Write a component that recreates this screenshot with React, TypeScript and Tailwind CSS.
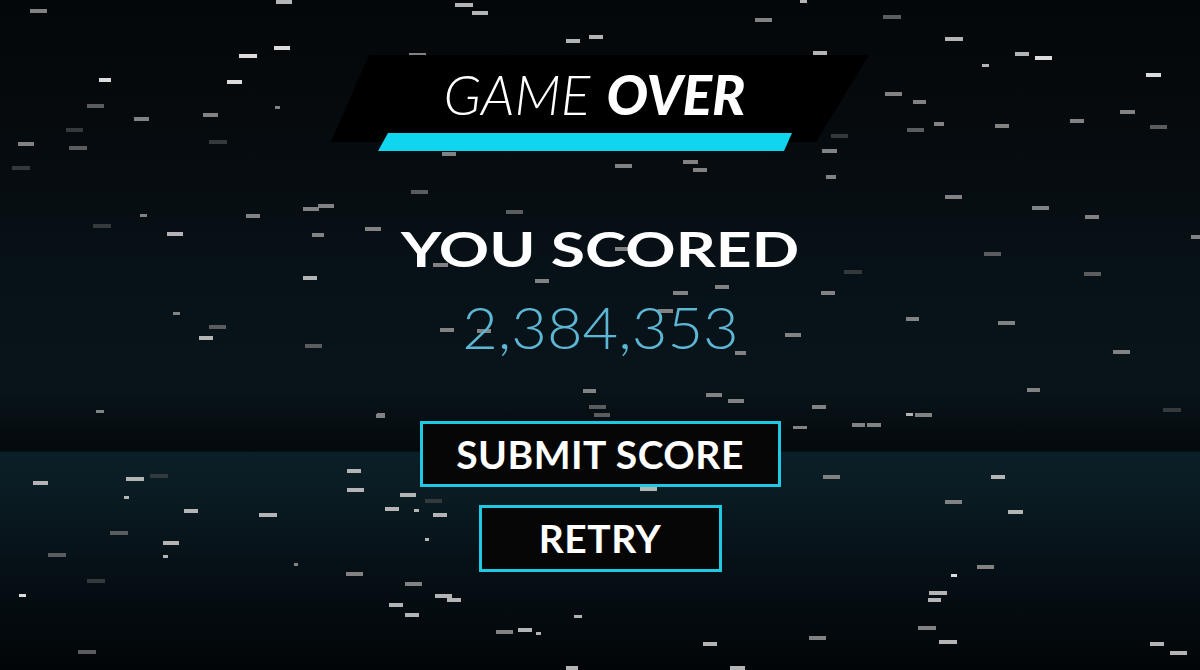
import React from 'react';

// starfield streaks: [x, y, width, tone]
const tones = ['bg-[#dcdcdc]', 'bg-[#b4b4b4]', 'bg-[#828282]', 'bg-[#5a5c5e]', 'bg-[#34393c]'];

const streaks: [number, number, number, number][] = [
  [30, 9, 17, 2], [276, 0, 16, 1], [239, 54, 18, 0], [274, 46, 16, 0], [99, 78, 12, 0],
  [227, 80, 15, 0], [87, 104, 17, 3], [134, 117, 15, 2], [203, 113, 15, 2], [66, 128, 17, 4],
  [18, 142, 16, 2], [69, 146, 18, 3], [209, 140, 18, 4], [12, 166, 18, 4], [275, 106, 5, 2],
  [455, 3, 18, 1], [472, 11, 16, 1], [755, 18, 17, 2], [566, 39, 14, 1], [589, 35, 14, 1],
  [409, 53, 17, 2], [442, 152, 14, 2], [615, 164, 17, 2], [683, 160, 15, 2], [693, 168, 14, 2],
  [411, 190, 17, 3], [303, 207, 16, 2], [318, 204, 16, 2], [506, 210, 17, 3], [365, 227, 16, 2],
  [800, 0, 7, 1], [883, 15, 18, 3], [945, 37, 18, 1], [813, 51, 14, 1], [1015, 52, 14, 1],
  [1035, 56, 17, 0], [982, 64, 7, 1], [1146, 73, 15, 0], [885, 92, 17, 2], [913, 100, 13, 2],
  [934, 122, 10, 2], [907, 128, 17, 3], [995, 124, 14, 2], [1070, 119, 14, 2], [1120, 110, 15, 2],
  [1150, 125, 17, 3], [831, 134, 17, 4], [822, 149, 15, 2], [826, 175, 10, 2], [945, 195, 17, 2],
  [1032, 206, 17, 2], [1085, 215, 14, 2], [1191, 235, 9, 2], [984, 252, 17, 3], [844, 270, 18, 4],
  [1084, 272, 17, 3], [821, 291, 14, 2],
  [140, 214, 7, 2], [93, 224, 18, 4], [167, 232, 16, 1], [246, 214, 14, 2], [312, 233, 12, 2],
  [303, 276, 14, 1], [173, 312, 7, 2], [209, 325, 17, 3], [199, 336, 14, 1], [305, 344, 17, 3],
  [433, 263, 15, 2], [535, 279, 14, 2], [615, 247, 16, 2], [673, 291, 15, 2], [715, 285, 14, 2],
  [658, 309, 15, 2], [440, 328, 14, 2], [477, 329, 14, 2], [785, 333, 16, 2], [735, 351, 11, 2],
  [583, 389, 13, 2], [589, 405, 17, 3], [594, 413, 16, 3], [706, 393, 16, 2], [728, 399, 16, 2],
  [377, 413, 8, 2], [793, 426, 7, 2], [347, 469, 14, 1], [347, 488, 17, 1], [400, 493, 16, 1],
  [425, 499, 17, 4], [385, 507, 14, 1], [414, 509, 5, 1], [433, 513, 14, 1], [640, 487, 17, 1],
  [425, 538, 4, 1], [346, 572, 17, 2], [405, 582, 17, 2], [435, 594, 17, 1], [447, 598, 14, 1],
  [389, 603, 14, 1], [405, 613, 14, 1], [574, 615, 8, 1], [496, 630, 17, 2], [518, 628, 14, 1],
  [536, 632, 5, 1], [703, 642, 14, 1], [566, 666, 12, 1], [730, 666, 15, 1],
  [96, 410, 8, 2], [376, 414, 9, 2], [33, 481, 15, 1], [126, 477, 18, 1], [150, 474, 18, 4],
  [124, 496, 5, 1], [184, 509, 14, 1], [259, 513, 18, 1], [110, 531, 18, 3], [163, 541, 16, 1],
  [48, 553, 18, 3], [163, 555, 5, 1], [294, 563, 4, 2], [87, 579, 18, 4], [19, 594, 7, 0],
  [78, 650, 18, 3],
  [906, 317, 13, 2], [998, 321, 17, 2], [1113, 350, 17, 2], [1027, 388, 13, 2], [812, 405, 14, 2],
  [906, 413, 7, 1], [915, 413, 17, 2], [852, 423, 13, 2], [867, 423, 14, 2], [800, 426, 7, 2],
  [1163, 408, 18, 4], [823, 475, 17, 2], [991, 475, 14, 1], [945, 500, 17, 2], [1008, 510, 15, 1],
  [977, 565, 17, 2], [951, 574, 6, 0], [929, 591, 18, 1], [928, 598, 13, 1], [918, 626, 18, 2],
  [809, 636, 17, 2], [939, 640, 18, 1], [1150, 642, 14, 1], [1170, 651, 17, 1],
];

const Starfield = () => (
  <div className="pointer-events-none absolute inset-0">
    {streaks.map(([x, y, w, t], i) => (
      <div
        key={i}
        className={`absolute ${tones[t]}`}
        style={{ left: x, top: y, width: w, height: w < 9 ? 3 : 4 }}
      />
    ))}
  </div>
);

const OutlineButton = ({ label, className }: { label: string; className: string }) => (
  <button
    className={`flex items-center justify-center border-[3px] border-[#1fc9e3] bg-[#060606] text-[39px] font-bold leading-none tracking-[0.5px] text-white ${className}`}
  >
    {label}
  </button>
);

const App = () => {
  return (
    <div className="relative h-[670px] w-full overflow-hidden bg-[linear-gradient(180deg,#040709_0%,#060b0f_22%,#071319_45%,#081419_58%,#050c10_65%,#04090c_67.3%,#0b1f28_67.5%,#0a1b22_74%,#061117_84%,#020508_100%)] font-['Lato','Liberation_Sans',sans-serif]">
      <Starfield />

      <div className="relative flex flex-col items-center pt-[55px]">
        {/* title banner */}
        <div className="flex w-[538px] flex-col">
          <div className="flex h-[87px] justify-center bg-black pt-[12px] pr-[11px] [clip-path:polygon(38px_0,100%_0,calc(100%-53px)_100%,0_100%)]">
            <h1 className="text-[55px] leading-none italic text-white">
              <span className="font-light">GAME</span> <span className="ml-[3px] font-black">OVER</span>
            </h1>
          </div>
          <div className="-mt-[9px] ml-[47px] h-[18px] w-[414px] bg-[#10d5ee] [clip-path:polygon(10px_0,100%_0,calc(100%-8px)_100%,0_100%)]" />
        </div>

        <h2 className="mt-[74px] scale-x-[1.3] text-[48px] font-bold leading-none text-white">YOU SCORED</h2>
        <p className="mt-[25px] scale-x-[1.06] text-[58px] font-light leading-none text-[#5db6d3]">2,384,353</p>

        <OutlineButton label="SUBMIT SCORE" className="mt-[65px] h-[66px] w-[361px]" />
        <OutlineButton label="RETRY" className="mt-[18px] h-[67px] w-[243px]" />
      </div>
    </div>
  );
};

export default App;
